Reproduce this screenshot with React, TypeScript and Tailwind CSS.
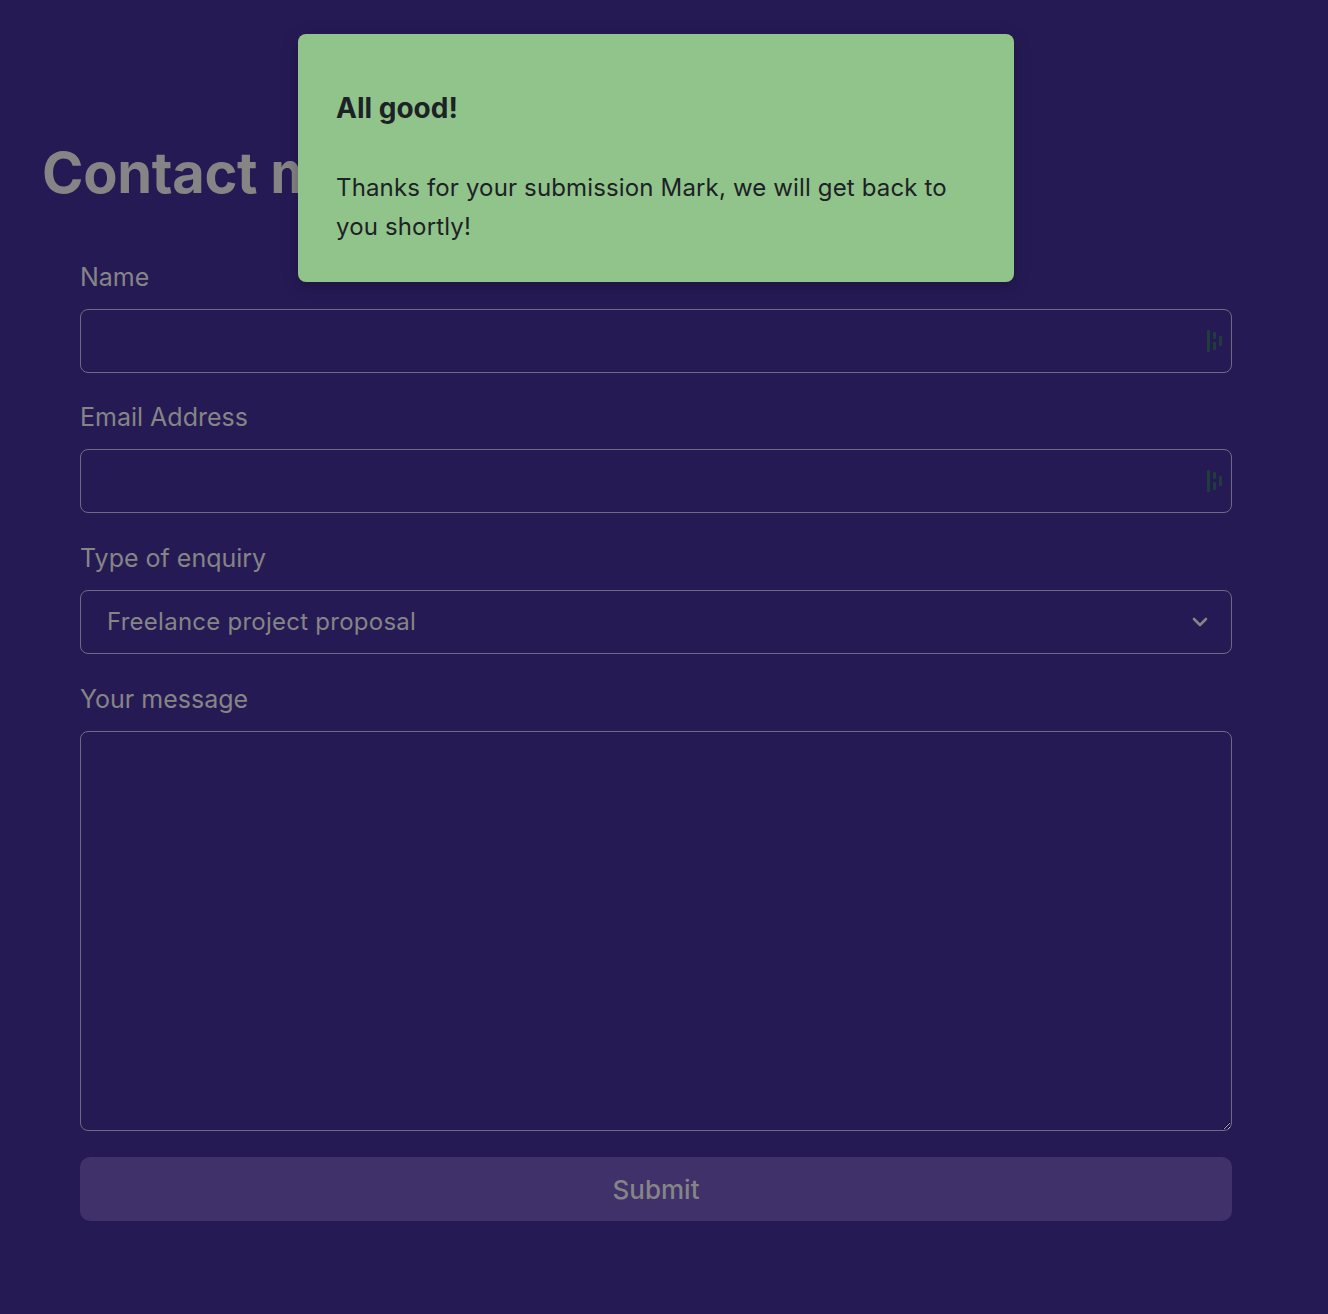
import React from "react";

function PwIcon() {
  return (
    <svg width="16" height="22" viewBox="0 0 16 22" className="absolute right-[9px] top-1/2 -translate-y-1/2">
      <rect x="1" y="0" width="3" height="22" rx="1" fill="#1e3d3c" />
      <rect x="7" y="2" width="3" height="7" rx="1" fill="#1e3d3c" />
      <rect x="7" y="12" width="3" height="8" rx="1" fill="#1e3d3c" />
      <rect x="13" y="6" width="3" height="10" rx="1" fill="#1e3d3c" />
    </svg>
  );
}

export default function App() {
  const font = { fontFamily: "Inter, 'Noto Sans', sans-serif" };
  return (
    <div className="relative min-h-[1314px] w-full bg-[#261a55]" style={font}>
      <div className="pl-[42px] pt-[137px]">
        <h1 className="text-[56px] font-bold leading-[72px] tracking-[-0.3px] text-[#858585]">Contact me</h1>
      </div>
      <form className="ml-[80px] mt-[50px] flex w-[1152px] flex-col">
        <label className="text-[25px] leading-[36px] text-[#858585]">Name</label>
        <div className="relative mt-[14px] h-[64px] rounded-[8px] border border-[#6f6985]">
          <PwIcon />
        </div>
        <label className="mt-[26px] text-[25px] leading-[36px] text-[#858585]">Email Address</label>
        <div className="relative mt-[14px] h-[64px] rounded-[8px] border border-[#6f6985]">
          <PwIcon />
        </div>
        <label className="mt-[27px] text-[25px] leading-[36px] text-[#858585]">Type of enquiry</label>
        <div className="relative mt-[14px] flex h-[64px] items-center rounded-[8px] border border-[#6f6985] pl-[26px] pr-[22px]">
          <span className="flex-1 text-[24px] tracking-[0.25px] text-[#858585]">Freelance project proposal</span>
          <svg width="18" height="12" viewBox="0 0 18 12" fill="none">
            <path d="M3 3l6 6 6-6" stroke="#858585" strokeWidth="2.6" strokeLinecap="round" strokeLinejoin="round" />
          </svg>
        </div>
        <label className="mt-[27px] text-[25px] leading-[36px] text-[#858585]">Your message</label>
        <textarea className="mt-[14px] h-[400px] rounded-[8px] border border-[#6f6985] bg-transparent outline-none" />
        <button
          type="button"
          className="mt-[26px] h-[64px] rounded-[10px] bg-[#40316a] text-[26px] font-medium text-[#858585]"
        >
          Submit
        </button>
      </form>

      <div className="absolute left-[298px] top-[34px] h-[248px] w-[716px] rounded-[8px] bg-[#91c48b] px-[38px] pt-[56px] shadow-[0_4px_16px_rgba(0,0,0,0.25)]">
        <div className="text-[28px] font-bold leading-[36px] text-[#1c2225]">All good!</div>
        <p className="mt-[42px] text-[24px] leading-[39px] tracking-[0.15px] text-[#1c2225]">
          Thanks for your submission Mark, we will get back to you shortly!
        </p>
      </div>
    </div>
  );
}
